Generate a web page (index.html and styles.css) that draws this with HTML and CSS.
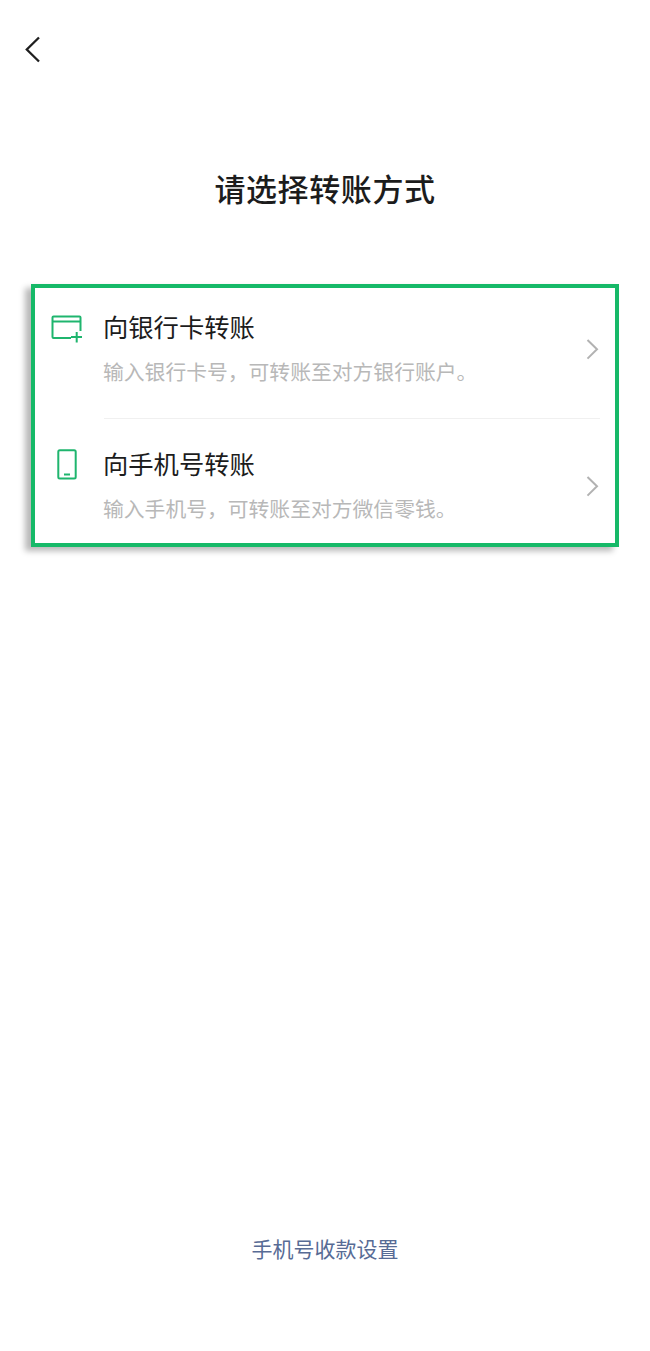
FILE: index.html
```html
<!DOCTYPE html>
<html lang="zh-CN">
<head>
    <meta charset="UTF-8">
    <meta name="viewport" content="width=device-width, initial-scale=1.0">
    <title>请选择转账方式</title>
    <link rel="stylesheet" href="styles.css">
</head>
<body>
    <header class="top-bar">
        <svg class="back-icon" width="18" height="28" viewBox="0 0 18 28">
            <path d="M15 1.500 L2.800 13.500 L15 25.500" fill="none" stroke="#1f1f1f" stroke-width="2.300"/>
        </svg>
    </header>

    <h1 class="page-title">请选择转账方式</h1>

    <section class="option-card">
        <div class="option-row option-row-bank">
            <svg class="option-icon" width="32" height="28" viewBox="0 0 32 28">
                <path d="M20 23 H2.500 Q1.500 23 1.500 22 V2.500 Q1.500 1.500 2.500 1.500 H28.500 Q29.500 1.500 29.500 2.500 V16" fill="none" stroke="#1fb56e" stroke-width="2"/>
                <path d="M1.500 6.500 H29.500" fill="none" stroke="#1fb56e" stroke-width="2"/>
                <path d="M20 22 H31 M25.700 17 V27.500" fill="none" stroke="#1fb56e" stroke-width="2"/>
            </svg>
            <div class="option-text">
                <div class="option-title">向银行卡转账</div>
                <div class="option-desc">输入银行卡号，可转账至对方银行账户。</div>
            </div>
            <svg class="chevron" width="14" height="21" viewBox="0 0 14 21">
                <path d="M1.500 1 L11 10.300 L1.500 19.600" fill="none" stroke="#b2b2b2" stroke-width="2"/>
            </svg>
        </div>
        <div class="option-row option-row-phone">
            <svg class="option-icon" width="32" height="32" viewBox="0 0 32 32">
                <rect x="7.300" y="2.300" width="17.400" height="28.200" rx="1.500" fill="none" stroke="#1fb56e" stroke-width="2"/>
                <path d="M13 26.500 H19" fill="none" stroke="#1fb56e" stroke-width="2"/>
            </svg>
            <div class="option-text">
                <div class="option-title">向手机号转账</div>
                <div class="option-desc">输入手机号，可转账至对方微信零钱。</div>
            </div>
            <svg class="chevron" width="14" height="21" viewBox="0 0 14 21">
                <path d="M1.500 1 L11 10.300 L1.500 19.600" fill="none" stroke="#b2b2b2" stroke-width="2"/>
            </svg>
        </div>
    </section>

    <a class="footer-link" href="#">手机号收款设置</a>
</body>
</html>
```

FILE: styles.css
```css
body {
    margin: 0;
    height: 1351px;
    background: #fff;
    font-family: "Noto Sans CJK SC", "Noto Sans", sans-serif;
    display: flex;
    flex-direction: column;
    overflow: hidden;
}

.top-bar {
    padding: 36px 0 0 24px;
    height: 28px;
}

.back-icon {
    display: block;
}

.page-title {
    margin: 101px 0 0;
    height: 46px;
    line-height: 46px;
    text-align: center;
    font-size: 31px;
    font-weight: 500;
    letter-spacing: 0.6px;
    color: #1c1c1c;
}

.option-card {
    margin: 73px 31px 0;
    height: 263px;
    box-sizing: border-box;
    border: 4px solid #16b968;
    background: #fff;
    box-shadow: -6px 4px 6px rgba(0, 0, 0, 0.28);
    padding: 0 15px 0 16px;
}

.option-row {
    box-sizing: border-box;
    display: flex;
    align-items: flex-start;
    position: relative;
}

.option-row-bank {
    height: 131px;
    padding-top: 20px;
}

/* divider starts under the text, not the icon */
.option-row-bank::after {
    content: "";
    position: absolute;
    left: 53px;
    right: 0;
    bottom: 0;
    border-bottom: 1px solid #f0f0f0;
}

.option-row-phone {
    height: 124px;
    padding-top: 26px;
}

.option-icon {
    flex: none;
}

.option-row-bank .option-icon {
    margin-top: 7px;
}

.option-row-phone .option-icon {
    margin-top: 3px;
}

.option-text {
    margin-left: 20px;
    flex: 1;
}

.option-title {
    font-size: 25.300px;
    line-height: 36px;
    color: #1c1c1c;
}

.option-desc {
    margin-top: 11px;
    font-size: 20.800px;
    line-height: 32px;
    color: #b8b8b8;
}

.chevron {
    flex: none;
    margin-top: 31px;
}

.footer-link {
    margin-top: auto;
    margin-bottom: 87px;
    text-align: center;
    font-size: 21px;
    line-height: 32px;
    color: #576b95;
    text-decoration: none;
}
```
